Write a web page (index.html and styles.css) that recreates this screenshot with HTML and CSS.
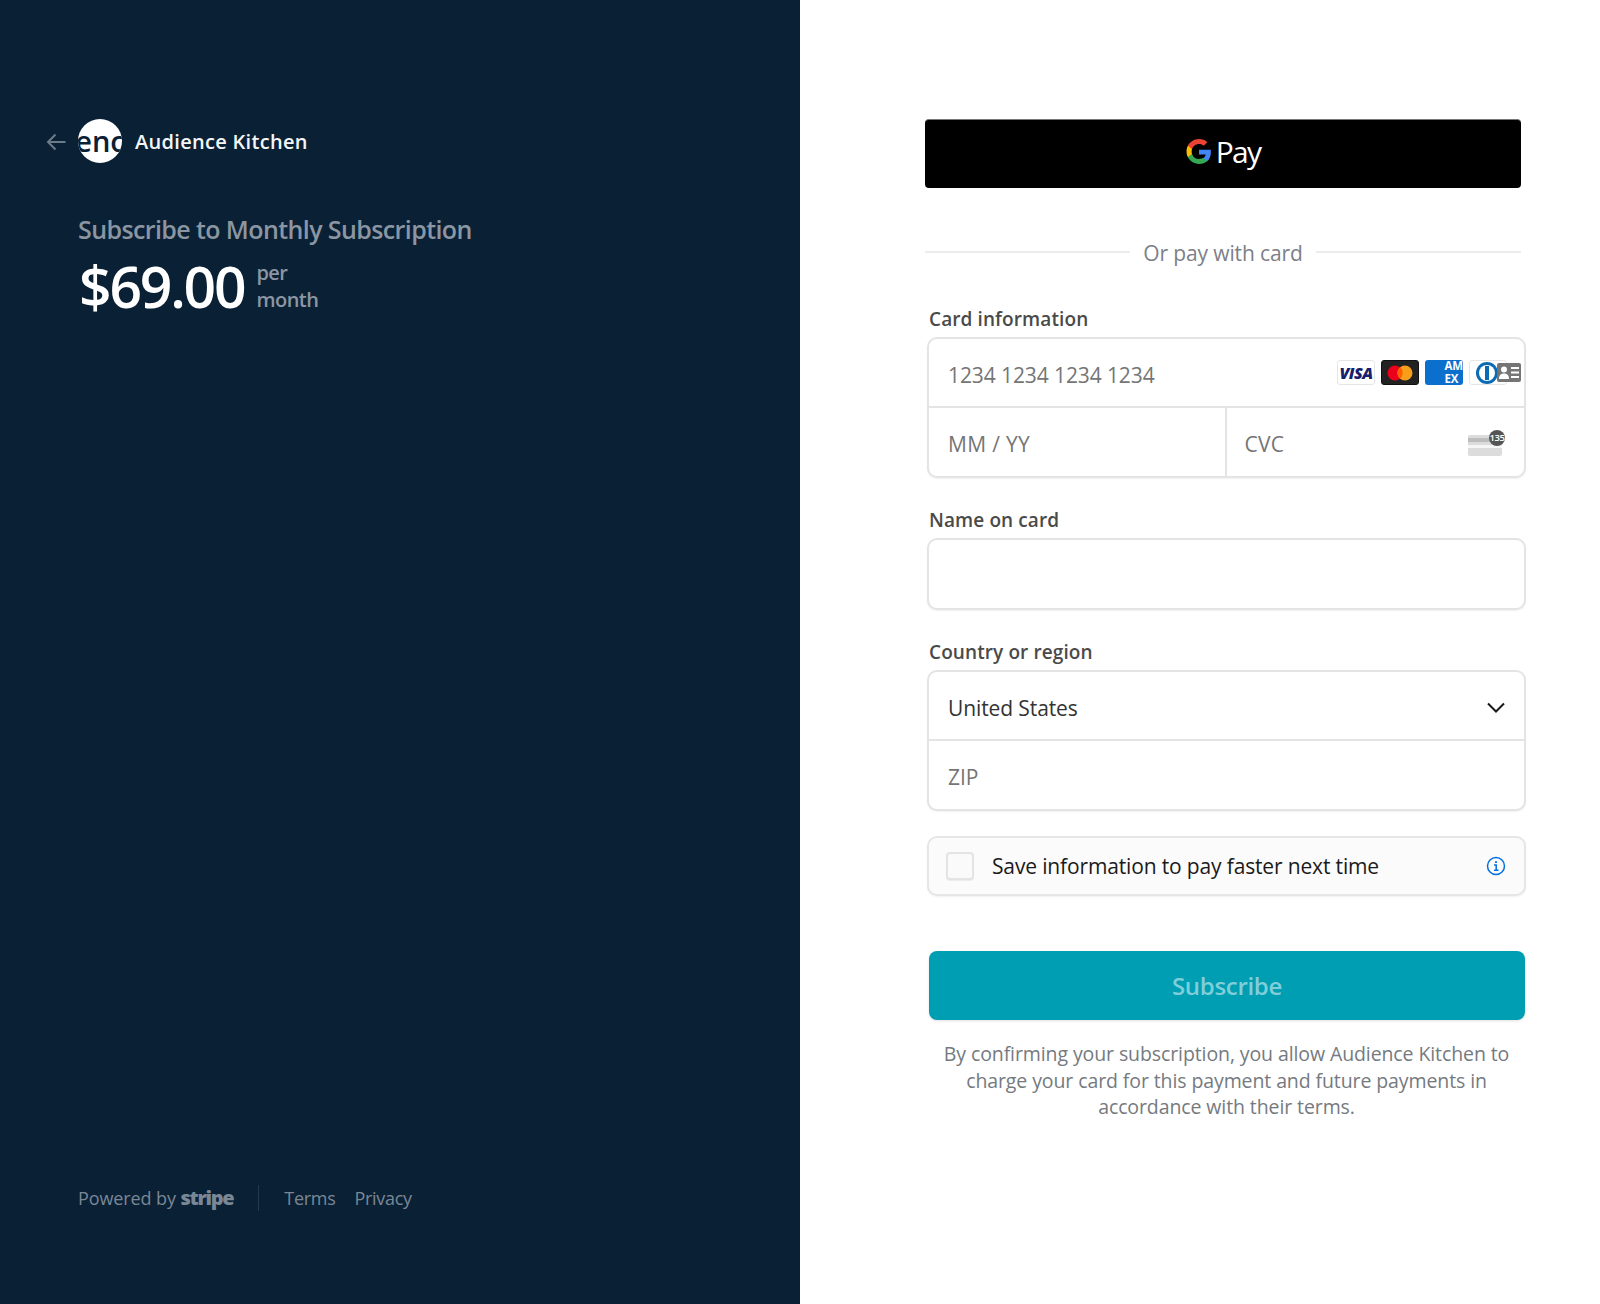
FILE: index.html
```html
<!DOCTYPE html>
<html lang="en">
<head>
    <meta charset="UTF-8">
    <meta name="viewport" content="width=device-width, initial-scale=1.0">
    <title>Subscribe to Monthly Subscription</title>
    <link rel="stylesheet" href="styles.css">
</head>
<body>

    <div class="page">

        <!-- Left: product summary -->
        <div class="summary">
            <div class="summary-top">
                <div class="merchant">
                    <svg class="back-arrow" width="20" height="18" viewBox="0 0 20 18" fill="none" stroke="#6d7a87" stroke-width="2"><path d="M19.500 9H2M9.500 1.500 2 9l7.500 7.500"/></svg>
                    <div class="merchant-logo"><span>enc</span></div>
                    <div class="merchant-name">Audience Kitchen</div>
                </div>
                <div class="product-name">Subscribe to Monthly Subscription</div>
                <div class="price-row">
                    <div class="price">$69.00</div>
                    <div class="price-period">per<br>month</div>
                </div>
            </div>
            <div class="footer">
                <div class="powered">Powered by <b class="stripe-word">stripe</b></div>
                <div class="footer-links">
                    <span>Terms</span>
                    <span>Privacy</span>
                </div>
            </div>
        </div>

        <!-- Right: payment form -->
        <div class="checkout">
            <div class="gpay-btn">
                <svg width="26" height="26" viewBox="0 0 48 48"><path fill="#4285f4" d="M46 24.500c0-1.600-.14-3.100-.4-4.500H24v8.800h12.400c-.55 2.800-2.150 5.200-4.600 6.800v5.700h7.400C43.600 36.800 46 31.200 46 24.500z"/><path fill="#34a853" d="M24 46c6.200 0 11.400-2 15.200-5.500l-7.400-5.700c-2 1.400-4.700 2.200-7.800 2.200-6 0-11.100-4-12.900-9.500H3.400v5.900C7.100 40.900 15 46 24 46z"/><path fill="#fbbc04" d="M11.100 27.500c-.5-1.400-.7-2.900-.7-4.500s.3-3.100.7-4.500v-5.900H3.400C1.900 15.600 1 19.200 1 23s.9 7.400 2.400 10.400l7.700-5.900z"/><path fill="#ea4335" d="M24 9c3.400 0 6.400 1.200 8.800 3.400l6.600-6.600C35.400 2.100 30.200 0 24 0 15 0 7.100 5.100 3.400 12.600l7.700 5.900C12.900 13 18 9 24 9z"/></svg>
                <span class="gpay-text">Pay</span>
            </div>

            <div class="or-divider"><span>Or pay with card</span></div>

            <div class="form-column">
                <div class="field-label">Card information</div>
                <div class="input-box">
                    <div class="input-row">
                        <span class="placeholder">1234 1234 1234 1234</span>
                        <div class="card-icons">
                            <div class="card-icon card-visa">VISA</div>
                            <div class="card-icon card-mc">
                                <svg width="26" height="16" viewBox="0 0 26 16"><circle cx="8" cy="8" r="7.500" fill="#eb001b"/><circle cx="18" cy="8" r="7.500" fill="#f79e1b"/><path fill="#ff5f00" d="M13 2.200a7.500 7.500 0 0 1 0 11.600 7.500 7.500 0 0 1 0-11.600z"/></svg>
                            </div>
                            <div class="card-icon card-amex"><span>AM<br>EX</span></div>
                            <div class="card-icon card-diners">
                                <svg width="24" height="22" viewBox="0 0 24 22"><circle cx="12" cy="11" r="11" fill="#0a6ab4"/><circle cx="12" cy="11" r="8" fill="#fff"/><rect x="10" y="4" width="4" height="14" fill="#0a6ab4"/></svg>
                            </div>
                            <!-- browser autofill contact icon sits over the last card -->
                            <svg class="autofill-icon" width="24" height="19" viewBox="0 0 24 19"><rect width="24" height="19" rx="2" fill="#6e6e6e"/><circle cx="7" cy="6.500" r="3" fill="#fff"/><path fill="#fff" d="M2 16c0-4 2-5.500 5-5.500s5 1.500 5 5.500z"/><path stroke="#fff" stroke-width="2" d="M14 5h8M14 9.500h8M14 14h8"/></svg>
                        </div>
                    </div>
                    <div class="input-row-split">
                        <div class="input-cell cell-left">
                            <span class="placeholder">MM / YY</span>
                        </div>
                        <div class="input-cell">
                            <span class="placeholder">CVC</span>
                            <div class="cvc-icon">
                                <div class="cvc-card"></div>
                                <div class="cvc-badge">135</div>
                            </div>
                        </div>
                    </div>
                </div>

                <div class="field-label label-gap">Name on card</div>
                <div class="input-box">
                    <div class="input-row input-row-tall"></div>
                </div>

                <div class="field-label label-gap">Country or region</div>
                <div class="input-box">
                    <div class="input-row">
                        <span class="value">United States</span>
                        <svg class="chevron" width="18" height="11" viewBox="0 0 18 11" fill="none" stroke="#1a1a1a" stroke-width="2"><path d="M1 1.500l8 8 8-8"/></svg>
                    </div>
                    <div class="input-row input-row-last">
                        <span class="placeholder">ZIP</span>
                    </div>
                </div>

                <div class="save-box">
                    <div class="checkbox"></div>
                    <span class="save-text">Save information to pay faster next time</span>
                    <svg class="info-icon" width="20" height="20" viewBox="0 0 20 20" fill="none" stroke="#0570de" stroke-width="1.500"><circle cx="10" cy="10" r="8.500"/><path d="M8 9h2.200v5M8 14.200h4.500"/><path d="M10 5.200v1.800" stroke-width="2"/></svg>
                </div>

                <div class="subscribe-btn">Subscribe</div>

                <p class="terms">By confirming your subscription, you allow Audience Kitchen to charge your card for this payment and future payments in accordance with their terms.</p>
            </div>
        </div>

    </div>

</body>
</html>
```

FILE: styles.css
```css
* {
    box-sizing: border-box;
}

body {
    margin: 0;
    font-family: "Open Sans", "Noto Sans", Arial, sans-serif;
    background-color: white;
}

.page {
    display: flex;
    min-height: 100vh;
}

/* Left side */
.summary {
    width: 800px;
    flex-shrink: 0;
    background-color: #0a2035;
    padding: 119px 0 0 46px;
    display: flex;
    flex-direction: column;
    justify-content: space-between;
}

.merchant {
    display: flex;
    align-items: center;
}

.back-arrow {
    margin: 2px 12px 0 0;
}

.merchant-logo {
    width: 44px;
    height: 44px;
    border-radius: 50%;
    background-color: white;
    overflow: hidden;
    display: flex;
    justify-content: center;
    align-items: center;
    color: #0a2035;
    font-size: 29px;
    font-weight: 600;
    line-height: 44px;
    margin-right: 13px;
}

.merchant-name {
    color: #f3f5f7;
    font-size: 20px;
    font-weight: 600;
    letter-spacing: 0.3px;
}

.product-name {
    margin: 48px 0 0 32px;
    color: #8b96a2;
    font-size: 25px;
    font-weight: 600;
    line-height: 36px;
    letter-spacing: -0.6px;
}

.price-row {
    display: flex;
    align-items: center;
    margin: 6px 0 0 33px;
}

.price {
    color: white;
    font-size: 57px;
    font-weight: 600;
    line-height: 66px;
    letter-spacing: -2.2px;
}

.price-period {
    margin-left: 12px;
    color: #8b96a2;
    font-size: 20px;
    font-weight: 600;
    line-height: 27px;
    letter-spacing: -0.5px;
}

.footer {
    display: flex;
    align-items: center;
    margin: 0 0 93px 32px;
    color: #7a8794;
    font-size: 18px;
    letter-spacing: -0.3px;
    line-height: 26px;
}

.powered {
    padding-right: 25px;
    border-right: 1px solid #26394b;
    letter-spacing: -0.1px;
}

.stripe-word {
    font-size: 20px;
    font-weight: 800;
    letter-spacing: -1.3px;
    color: #7a8794;
}

.footer-links {
    display: flex;
    gap: 19px;
    padding-left: 25px;
}

/* Right side */
.checkout {
    flex: 1;
    padding: 119px 0 0 125px;
}

.gpay-btn {
    width: 596px;
    height: 69px;
    background-color: black;
    border-top: 1px solid #777;
    border-radius: 4px;
    padding-bottom: 4px;
    display: flex;
    justify-content: center;
    align-items: center;
    gap: 4px;
}

.gpay-text {
    color: white;
    font-size: 30px;
    letter-spacing: -1.8px;
    line-height: 34px;
}

.or-divider {
    width: 596px;
    margin-top: 47px;
    display: flex;
    align-items: center;
    gap: 13px;
    color: #7c8087;
    font-size: 21px;
    line-height: 32px;
    letter-spacing: -0.13px;
}

.or-divider span {
    padding-top: 2px;
}

.or-divider::before,
.or-divider::after {
    content: "";
    flex: 1;
    height: 2px;
    background-color: #ececec;
}

.form-column {
    width: 599px;
    margin-left: 2px;
}

.field-label {
    color: #4a4a4a;
    font-size: 19px;
    font-weight: 600;
    line-height: 26px;
    margin: 37px 0 5px 2px;
    letter-spacing: 0.1px;
}

.label-gap {
    margin-top: 29px;
}

.input-box {
    border: 2px solid #e4e4e4;
    border-radius: 10px;
    background-color: white;
    box-shadow: 0 1px 2px rgba(0, 0, 0, 0.06);
}

.input-row {
    height: 69px;
    padding: 4px 19px 0 19px;
    display: flex;
    align-items: center;
    justify-content: space-between;
    border-bottom: 2px solid #e4e4e4;
    font-size: 21px;
    letter-spacing: -0.1px;
}

.input-row-tall {
    height: 68px;
    border-bottom: none;
}

.input-row-last {
    height: 68px;
    border-bottom: none;
}

.input-row-split {
    display: flex;
    height: 68px;
    font-size: 21px;
    letter-spacing: 0.3px;
}

.input-cell {
    flex: 1;
    display: flex;
    align-items: center;
    justify-content: space-between;
    padding: 4px 18px 0 18px;
}

.cell-left {
    flex: 0 0 297.500px;
    padding-left: 19px;
    border-right: 2px solid #e4e4e4;
}

.placeholder {
    color: #757575;
}

.value {
    color: #333;
}

/* Card brand icons */
.card-icons {
    position: relative;
    display: flex;
    gap: 6px;
    margin: -4px -2px 0 0;
}

.card-icon {
    width: 38px;
    height: 25px;
    border-radius: 3px;
    display: flex;
    justify-content: center;
    align-items: center;
    overflow: hidden;
}

.card-visa {
    background-color: white;
    border: 1px solid #e6e6e6;
    color: #14206e;
    font-size: 16px;
    font-weight: 800;
    font-style: italic;
    letter-spacing: -0.5px;
}

.card-mc {
    background-color: #222;
    border: 1px solid #111;
}

.card-amex {
    background-color: #0b6fce;
    color: white;
    font-size: 11.500px;
    font-weight: 700;
    line-height: 12.500px;
    justify-content: flex-end;
    overflow: visible;
}

.card-diners {
    background-color: white;
    border: 1px solid #e6e6e6;
    justify-content: flex-start;
    padding-left: 5px;
}

.autofill-icon {
    position: absolute;
    top: 3px;
    right: -14px;
    opacity: 0.95;
}

.cvc-icon {
    position: relative;
    width: 34px;
    height: 24px;
    margin-right: 4px;
}

.cvc-card {
    width: 34px;
    height: 21px;
    margin-top: 3px;
    border-radius: 2px;
    background: linear-gradient(#dcdcdc 0 3px, #bdbdbd 3px 7px, #dcdcdc 7px 10px, #f6f6f6 10px 13px, #dcdcdc 13px);
}

.cvc-badge {
    position: absolute;
    top: -2px;
    right: -3px;
    width: 16px;
    height: 16px;
    border-radius: 50%;
    background-color: #555;
    color: white;
    font-size: 9.500px;
    font-weight: 600;
    line-height: 16px;
    text-align: center;
    letter-spacing: -0.5px;
}

/* Save row */
.save-box {
    margin-top: 25px;
    height: 60px;
    border: 2px solid #e6e6e6;
    border-radius: 10px;
    background-color: #fbfbfb;
    box-shadow: 0 1px 2px rgba(0, 0, 0, 0.06);
    display: flex;
    align-items: center;
    padding: 0 18px 0 17px;
}

.checkbox {
    width: 28px;
    height: 28px;
    border: 2px solid #e4e4e4;
    border-radius: 4px;
    background-color: #fafafa;
    margin-right: 18px;
    box-shadow: 0 1px 1px rgba(0, 0, 0, 0.06);
}

.save-text {
    flex: 1;
    color: #1a1a1a;
    font-size: 21px;
    letter-spacing: -0.15px;
}

.subscribe-btn {
    margin: 55px 1px 0 2px;
    height: 69px;
    border-radius: 8px;
    background-color: #009eb3;
    color: #7fced9;
    font-size: 24px;
    font-weight: 600;
    letter-spacing: -0.3px;
    display: flex;
    justify-content: center;
    align-items: center;
    box-shadow: 0 1px 3px rgba(0, 0, 0, 0.12);
}

.terms {
    margin: 21px 10px 0 10px;
    color: #757a80;
    font-size: 19.500px;
    line-height: 26.500px;
    text-align: center;
    letter-spacing: -0.1px;
}
```
